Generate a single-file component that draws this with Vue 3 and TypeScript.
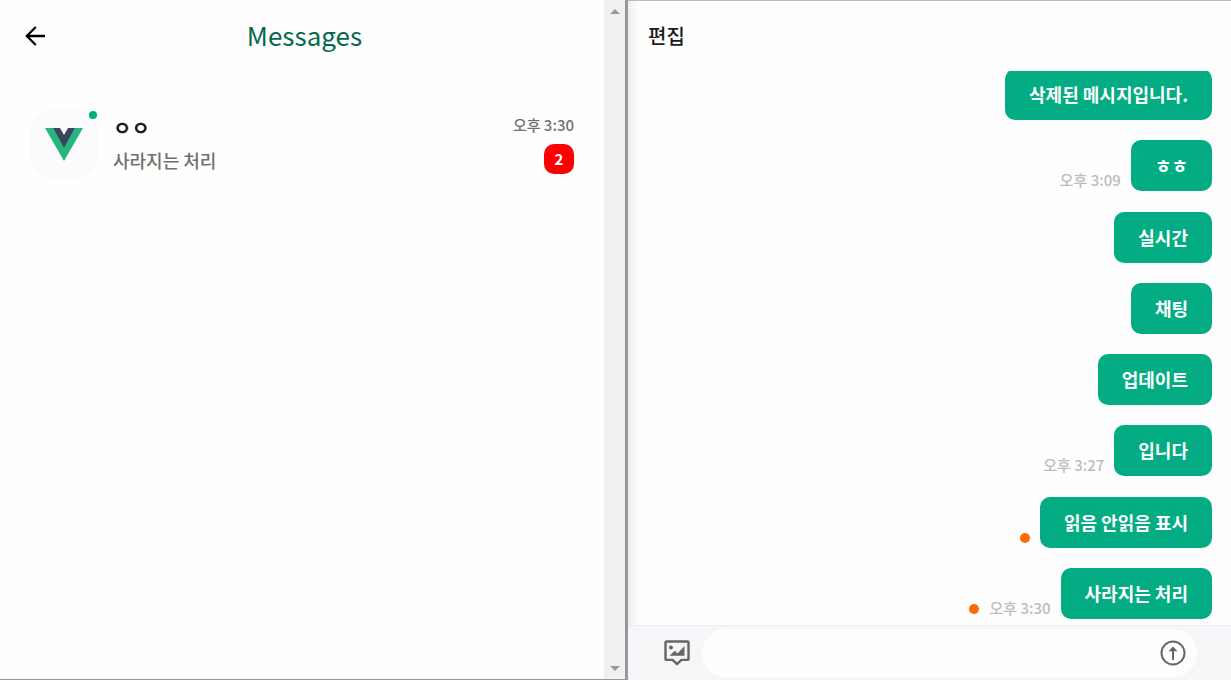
<script setup lang="ts">
import { ref } from 'vue'

interface Message {
  id: number
  text: string
  time?: string
  unread?: boolean
}

const messages: Message[] = [
  { id: 1, text: '삭제된 메시지입니다.' },
  { id: 2, text: 'ㅎㅎ', time: '오후 3:09' },
  { id: 3, text: '실시간' },
  { id: 4, text: '채팅' },
  { id: 5, text: '업데이트' },
  { id: 6, text: '입니다', time: '오후 3:27' },
  { id: 7, text: '읽음 안읽음 표시', unread: true },
  { id: 8, text: '사라지는 처리', time: '오후 3:30', unread: true },
]

const draft = ref('')
</script>

<template>
  <div class="app">
    <section class="inbox">
      <div class="inbox-main">
        <header class="inbox-header">
          <button class="icon-button" type="button" aria-label="Back">
            <svg width="22" height="22" viewBox="0 0 22 22" fill="none" stroke="#000" stroke-width="2.3">
              <path d="M20 11H2.500M10.800 2L1.800 11l9 9" />
            </svg>
          </button>
          <h1>Messages</h1>
        </header>
        <a class="room" href="#">
          <span class="avatar">
            <svg width="38" height="33" viewBox="0 0 38 33">
              <path fill="#28b67e" d="M0 0h8l11 19L30 0h8L19 33z" />
              <path fill="#35495e" d="M8 0h7l4 7 4-7h7L19 20z" />
            </svg>
            <span class="online"></span>
          </span>
          <span class="summary">
            <strong>ㅇㅇ</strong>
            <span class="preview">사라지는 처리</span>
          </span>
          <span class="meta">
            <span class="room-time">오후 3:30</span>
            <span class="count">2</span>
          </span>
        </a>
      </div>
      <div class="scrollbar" aria-hidden="true">
        <svg width="10" height="5" viewBox="0 0 10 5"><path fill="#9a9a9a" d="M0 5l5-5 5 5z" /></svg>
        <svg width="10" height="5" viewBox="0 0 10 5"><path fill="#9a9a9a" d="M0 0h10L5 5z" /></svg>
      </div>
    </section>

    <section class="chat">
      <header class="chat-header">
        <button class="edit" type="button">편집</button>
      </header>
      <div class="viewport">
        <ul class="messages">
          <li v-for="m in messages" :key="m.id">
            <span v-if="m.unread" class="unread"></span>
            <span v-if="m.time" class="time">{{ m.time }}</span>
            <span class="bubble">{{ m.text }}</span>
          </li>
        </ul>
      </div>
      <form class="composer" @submit.prevent>
        <button class="icon-button" type="button" aria-label="Image">
          <svg width="26" height="26" viewBox="0 0 26 26" fill="none">
            <path stroke="#666" stroke-width="2.400" stroke-linejoin="round" d="M2.500 1.500h21a1 1 0 0 1 1 1v16.400a1 1 0 0 1-1 1H17.500L13 24l-4.500-4.100H2.500a1 1 0 0 1-1-1V2.500a1 1 0 0 1 1-1z" />
            <circle cx="7" cy="7.500" r="2" fill="#666" />
            <path fill="#666" d="M5.500 15.800l5.300-5 2.700 2.700L20.500 6v9.800z" />
          </svg>
        </button>
        <div class="field">
          <input v-model="draft" type="text" aria-label="Message" />
          <button class="icon-button" type="submit" aria-label="Send">
            <svg width="26" height="26" viewBox="0 0 26 26" fill="none">
              <circle cx="13" cy="13" r="11.500" stroke="#666" stroke-width="2" />
              <path stroke="#666" stroke-width="2" d="M13 20V9" />
              <path fill="#666" d="M8.500 11.300L13 6.500l4.500 4.800z" />
            </svg>
          </button>
        </div>
      </form>
    </section>
  </div>
</template>

<style>
body {
  margin: 0;
  background: #fefefe;
}
</style>

<style scoped>
.app {
  display: grid;
  grid-template-columns: 628fr 603fr;
  height: 100vh;
  overflow: hidden;
  font-family: "Noto Sans CJK KR", sans-serif;
  color: #1c1c1c;
}

button {
  padding: 0;
  border: 0;
  background: none;
  font: inherit;
  color: inherit;
}

.icon-button {
  display: flex;
}

.inbox {
  display: flex;
  min-width: 0;
  box-sizing: border-box;
  border-right: 3px solid #98979b;
  border-bottom: 1px solid #98989a;
}

.inbox-main {
  flex: 1;
  min-width: 0;
}

.inbox-header {
  display: grid;
  grid-template-columns: 22px 1fr 22px;
  align-items: center;
  height: 72px;
  padding: 0 20px 0 25px;
}

h1 {
  margin: 0;
  padding-bottom: 3px;
  font-size: 26px;
  line-height: 36px;
  font-weight: 400;
  text-align: center;
  color: #05684f;
}

.room {
  display: flex;
  gap: 15px;
  padding: 38px 30px 0;
  color: inherit;
  text-decoration: none;
}

.avatar {
  position: relative;
  display: grid;
  place-items: center;
  width: 68px;
  height: 68px;
  border-radius: 20px;
  background: #fbfafc;
}

.online {
  position: absolute;
  top: 1px;
  right: 1px;
  width: 8px;
  height: 8px;
  border-radius: 50%;
  background: #00ac80;
}

.summary {
  flex: 1;
  display: flex;
  flex-direction: column;
}

strong {
  font-size: 20px;
  line-height: 36px;
  font-weight: 700;
}

.preview {
  font-size: 18px;
  line-height: 28px;
  font-weight: 500;
  color: #707070;
}

.meta {
  display: flex;
  flex-direction: column;
  align-items: flex-end;
  gap: 6px;
}

.room-time {
  padding: 3px 0 1px;
  font-size: 15px;
  line-height: 24px;
  font-weight: 500;
  color: #707070;
}

.count {
  width: 30px;
  border-radius: 10px;
  background: #f00;
  color: #fff;
  font-size: 15px;
  line-height: 30px;
  font-weight: 700;
  text-align: center;
}

.scrollbar {
  display: flex;
  flex-direction: column;
  justify-content: space-between;
  align-items: center;
  width: 21px;
  padding: 9px 0 8px;
  box-sizing: border-box;
  background: #f1eff2;
}

.chat {
  display: flex;
  flex-direction: column;
  min-width: 0;
  min-height: 0;
  box-sizing: border-box;
  border-top: 1px solid #c8b2c8;
  background: linear-gradient(to right, #ececee, #fefefe00 10px);
}

.chat-header {
  display: flex;
  align-items: center;
  height: 70px;
  padding: 0 20px;
}

.edit {
  font-size: 20px;
  line-height: 30px;
  font-weight: 500;
}

.viewport {
  flex: 1;
  min-height: 0;
  overflow: hidden;
}

.messages {
  display: flex;
  flex-direction: column;
  justify-content: space-between;
  height: calc(100% - 4px);
  margin: -2px 0 0;
  padding: 0 19px;
  list-style: none;
}

li {
  display: flex;
  justify-content: flex-end;
  align-items: flex-end;
  gap: 10px;
}

.bubble {
  padding: 12px 24px 13px;
  border-radius: 10px;
  background: #03ac82;
  color: #fff;
  font-size: 18px;
  line-height: 26px;
  font-weight: 700;
}

.time {
  font-size: 15px;
  line-height: 22px;
  font-weight: 500;
  color: #bdbbbd;
}

.unread {
  width: 10px;
  height: 10px;
  margin-bottom: 5px;
  border-radius: 50%;
  background: #ff6a05;
}

.composer {
  display: flex;
  align-items: center;
  gap: 12px;
  box-sizing: border-box;
  height: 55px;
  padding: 0 34px 0 36px;
  border-top: 1px solid #ecedf5;
  background: #f6f6f9;
}

.field {
  flex: 1;
  display: flex;
  align-items: center;
  height: 48px;
  padding: 0 11px 0 24px;
  border-radius: 24px;
  background: #fefefe;
}

input {
  flex: 1;
  min-width: 0;
  padding: 0;
  border: 0;
  outline: 0;
  background: none;
  font: inherit;
  font-size: 18px;
}
</style>
